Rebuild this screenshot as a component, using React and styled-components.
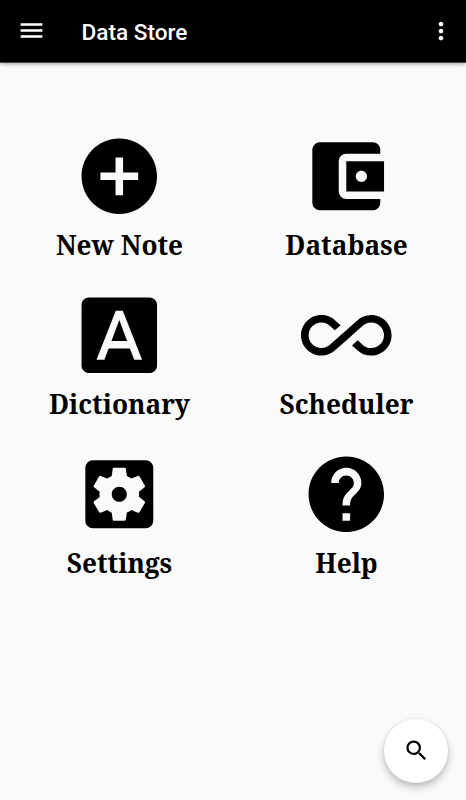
import React from "react"
import styled, { createGlobalStyle } from "styled-components"
import {
  MdAccountBalanceWallet,
  MdAddCircle,
  MdAllInclusive,
  MdFontDownload,
  MdHelp,
  MdMenu,
  MdMoreVert,
  MdSearch,
  MdSettingsApplications,
} from "react-icons/md"

const GlobalStyle = createGlobalStyle`
  * {
    box-sizing: border-box;
  }
  body {
    margin: 0;
    background: #fafafa;
  }
  button {
    border: 0;
    padding: 0;
    background: none;
    color: inherit;
    font: inherit;
  }
  svg {
    display: block;
  }
`

const Screen = styled.div`
  height: 100vh;
  overflow: hidden;
  display: flex;
  flex-direction: column;
  background: #fafafa;
  color: #000;
`

const AppBar = styled.header`
  flex: none;
  height: 63px;
  padding: 0 11px 1px 17px;
  display: flex;
  align-items: center;
  background: #000;
  border-bottom: 1px solid #4a4a4a;
  color: #fff;
  box-shadow: 0 1px 4px rgba(0, 0, 0, 0.35);
`

const Title = styled.h1`
  flex: 1;
  margin: 4px 0 0 35.5px;
  font: 500 22.6px/30px Roboto, sans-serif;
`

const Grid = styled.main`
  flex: 1;
  padding: 68px 6px 0;
  display: grid;
  grid-template-columns: 1fr 1fr;
  grid-auto-rows: 159px;
`

const Tile = styled.button`
  display: flex;
  flex-direction: column;
  align-items: center;
`

const Label = styled.span`
  height: 40px;
  font: bold 26.2px/46px "Noto Serif", "DejaVu Serif", serif;
  white-space: nowrap;
`

const SearchButton = styled.button`
  position: absolute;
  right: 18px;
  bottom: 17px;
  width: 64px;
  height: 64px;
  padding-bottom: 1px;
  display: flex;
  align-items: center;
  justify-content: center;
  border-radius: 50%;
  background: #fff;
  box-shadow: 0 5px 9px rgba(0, 0, 0, 0.2), 0 1px 4px rgba(0, 0, 0, 0.12);
`

const tiles = [
  { name: "New Note", icon: MdAddCircle },
  { name: "Database", icon: MdAccountBalanceWallet },
  { name: "Dictionary", icon: MdFontDownload },
  { name: "Scheduler", icon: MdAllInclusive },
  { name: "Settings", icon: MdSettingsApplications },
  { name: "Help", icon: MdHelp },
]

const App = () => {
  return (
    <Screen>
      <GlobalStyle />
      <AppBar>
        <button aria-label="Menu">
          <MdMenu size={29} />
        </button>
        <Title>Data Store</Title>
        <button aria-label="More">
          <MdMoreVert size={28} />
        </button>
      </AppBar>
      <Grid>
        {tiles.map(({ name, icon: Icon }) => (
          <Tile key={name}>
            <Icon size={90.6} />
            <Label>{name}</Label>
          </Tile>
        ))}
      </Grid>
      <SearchButton aria-label="Search">
        <MdSearch size={27} />
      </SearchButton>
    </Screen>
  )
}

export default App
